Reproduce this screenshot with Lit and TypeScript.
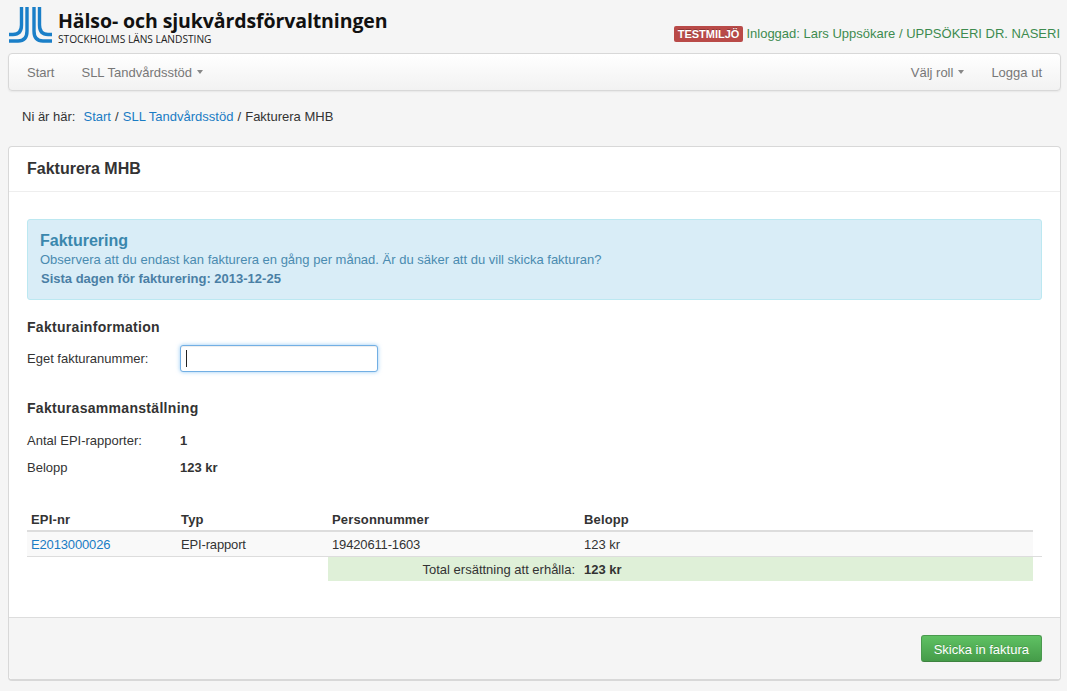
import { LitElement, html, css } from "lit";
import { customElement } from "lit/decorators.js";

@customElement("app-root")
export class AppRoot extends LitElement {
  static styles = css`
    :host {
      display: block;
      width: 1067px;
      height: 691px;
      overflow: hidden;
      box-sizing: border-box;
      padding: 0 6px 0 8px;
      background: #f5f5f5;
      font-family: "Liberation Sans", Arial, sans-serif;
      font-size: 13px;
      line-height: 17px;
      color: #333;
    }
    a { color: #1a7cc4; text-decoration: none; }
    .top { height: 53px; display: flex; justify-content: space-between; }
    .logo { display: flex; gap: 6px; padding: 7px 0 0 1px; }
    .logo svg { display: block; }
    .brand { display: flex; flex-direction: column; }
    .brand b {
      font-family: "Open Sans", "Liberation Sans", sans-serif;
      font-size: 19.5px; line-height: 22px; margin-top: 3px; color: #111; font-weight: 700; letter-spacing: -0.1px; white-space: nowrap;
    }
    .brand span { font-family: "Open Sans", "Liberation Sans", sans-serif; font-size: 10.2px; line-height: 12px; margin-top: 1px; color: #222; font-weight: 400; white-space: nowrap; }
    .who { padding: 25px 1px 0 0; color: #3d8b4f; display: flex; align-items: flex-start; gap: 3px; white-space: nowrap; }
    .badge {
      background: #b94a48; color: #fff; font-weight: 700; font-size: 11px; line-height: 14px;
      padding: 1px 4px; border-radius: 2px; text-shadow: 0 -1px 0 rgba(0,0,0,.25); margin-top: 1px;
    }
    .nav {
      height: 38px; box-sizing: border-box; display: flex; justify-content: space-between; align-items: center;
      padding: 0 18px;
      border: 1px solid #d8d8d8; border-radius: 4px;
      background: linear-gradient(#fff, #f2f2f2);
      box-shadow: 0 1px 2px rgba(0,0,0,.06);
      color: #777;
    }
    .nav div { display: flex; gap: 27px; }
    .nav span { display: inline-flex; align-items: center; gap: 5px; }
    .caret { width: 0; height: 0; border-left: 3.5px solid transparent; border-right: 3.5px solid transparent; border-top: 4px solid #888; }
    .crumb { height: 55px; padding: 17px 0 0 14px; box-sizing: border-box; color: #333; }
    .crumb .lead { margin-right: 8px; }
    .crumb .sep { padding: 0 0.5px; }
    .panel {
      width: 1053px; height: 535px; box-sizing: border-box; display: flex; flex-direction: column;
      background: #fff; border: 1px solid #d8d8d8; border-bottom-width: 2px; border-radius: 4px;
    }
    .head { height: 45px; flex: none; box-sizing: border-box; padding: 13px 18px 0; border-bottom: 1px solid #eee; font-size: 16px; line-height: 18px; font-weight: 700; color: #333; }
    .body { flex: 1; padding: 27px 18px 0; }
    .alert {
      height: 81px; box-sizing: border-box; padding: 11px 12px 0; background: #d9edf7; border: 1px solid #bce8f1; border-radius: 3px; color: #4a8bb0;
      line-height: 15px;
    }
    .alert h4 { margin: 0 0 1px; font-size: 16px; line-height: 20px; font-weight: 700; color: #3a87ad; }
    .alert strong { display: block; margin: 4px 0 0 1px; color: #4a7fa5; }
    h5 { margin: 0; font-size: 14px; line-height: 16px; font-weight: 700; color: #333; letter-spacing: 0.3px; }
    .s1 { margin-top: 19px; }
    .field { display: flex; align-items: center; margin-top: 10px; height: 27px; }
    .field label { width: 153px; }
    .input {
      width: 198px; height: 27px; box-sizing: border-box; border: 1px solid #72afe4; border-radius: 3px; background: #fff;
      box-shadow: inset 0 1px 1px rgba(0,0,0,.075), 0 0 4px rgba(82,168,236,.6);
      display: flex; align-items: center; padding-left: 5px;
    }
    .cursor { width: 1px; height: 17px; background: #222; }
    .s2 { margin-top: 28px; }
    .kv { display: grid; grid-template-columns: 153px 1fr; margin-top: 10px; height: 17px; }
    .kv.first { margin-top: 16px; }
    .table { margin-top: 32px; width: 1015px; }
    .row { display: grid; grid-template-columns: 150px 151px 252px 453px; grid-template-rows: 24px; width: 1006px; }
    .row > div { padding: 0 4px; }
    .th { height: 24px; font-weight: 700; border-bottom: 2px solid #ddd; line-height: 24px; box-sizing: border-box; grid-template-rows: 22px; letter-spacing: 0.15px; }
    .tr { height: 24px; background: #f9f9f9; line-height: 26px; }
    .tr .tight { letter-spacing: -0.15px; }
    .divider { height: 1px; background: #ddd; }
    .total { display: grid; grid-template-columns: 301px 252px 453px; grid-template-rows: 24px; width: 1006px; height: 24px; line-height: 26px; }
    .total .l { grid-column: 2; background: #dff0d8; text-align: right; padding-right: 5px; }
    .total .r { background: #dff0d8; padding: 0 4px; font-weight: 700; }
    .foot {
      height: 62px; flex: none; box-sizing: border-box; background: #f5f5f5; border-top: 1px solid #ddd; border-radius: 0 0 4px 4px;
      display: flex; justify-content: flex-end; align-items: flex-start; padding: 17px 18px 0;
    }
    .btn {
      height: 27px; box-sizing: border-box; padding: 1px 12px 0; color: #fff; border: 1px solid #4a9a4e; border-bottom-color: #3e8341; border-radius: 3px;
      background: linear-gradient(#5fc163, #459c49); text-shadow: 0 -1px 0 rgba(0,0,0,.15); font: inherit;
    }
  `;

  render() {
    return html`
      <div class="top">
        <div class="logo">
          <svg width="43" height="36" viewBox="0 0 43 36" fill="none" stroke="#1a7fc8" stroke-width="3.4">
            <path d="M12.5 0V18Q12.5 27.5 4 27.5H0" />
            <path d="M18 0V24Q18 34 9 34H0" />
            <path d="M30.5 0V18Q30.5 27.5 39 27.5H43" />
            <path d="M25 0V24Q25 34 34 34H43" />
          </svg>
          <div class="brand">
            <b>Hälso- och sjukvårdsförvaltningen</b>
            <span>STOCKHOLMS LÄNS LANDSTING</span>
          </div>
        </div>
        <div class="who"><span class="badge">TESTMILJÖ</span><span>Inloggad: Lars Uppsökare / UPPSÖKERI DR. NASERI</span></div>
      </div>
      <div class="nav">
        <div><span>Start</span><span>SLL Tandvårdsstöd <i class="caret"></i></span></div>
        <div><span>Välj roll <i class="caret"></i></span><span>Logga ut</span></div>
      </div>
      <div class="crumb"><span class="lead">Ni är här:</span><a href="#">Start</a><span class="sep"> / </span><a href="#">SLL Tandvårdsstöd</a><span class="sep"> / </span>Fakturera MHB</div>
      <section class="panel">
        <div class="head">Fakturera MHB</div>
        <div class="body">
          <div class="alert">
            <h4>Fakturering</h4>
            Observera att du endast kan fakturera en gång per månad. Är du säker att du vill skicka fakturan?
            <strong>Sista dagen för fakturering: 2013-12-25</strong>
          </div>
          <h5 class="s1">Fakturainformation</h5>
          <div class="field"><label>Eget fakturanummer:</label><div class="input"><i class="cursor"></i></div></div>
          <h5 class="s2">Fakturasammanställning</h5>
          <div class="kv first"><span>Antal EPI-rapporter:</span><b>1</b></div>
          <div class="kv"><span>Belopp</span><b>123 kr</b></div>
          <div class="table">
            <div class="row th"><div>EPI-nr</div><div>Typ</div><div>Personnummer</div><div>Belopp</div></div>
            <div class="row tr"><div class="tight"><a href="#">E2013000026</a></div><div class="tight">EPI-rapport</div><div class="tight">19420611-1603</div><div>123 kr</div></div>
            <div class="divider"></div>
            <div class="total"><div class="l">Total ersättning att erhålla:</div><div class="r">123 kr</div></div>
          </div>
        </div>
        <div class="foot"><button class="btn">Skicka in faktura</button></div>
      </section>
    `;
  }
}
